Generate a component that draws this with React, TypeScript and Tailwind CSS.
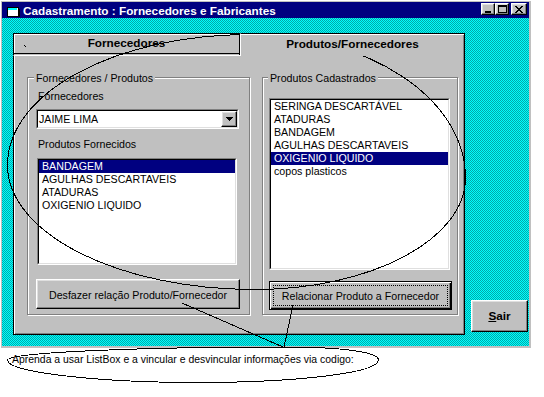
import React from 'react';

const raised =
  'border border-t-white border-l-white border-r-black border-b-black shadow-[inset_-1px_-1px_0_#808080,inset_1px_1px_0_#dfdfdf]';

function Sunken({ className, children }: { className?: string; children?: React.ReactNode }) {
  return (
    <div className={`border border-t-[#808080] border-l-[#808080] border-r-white border-b-white ${className ?? ''}`}>
      <div className="h-full w-full border border-t-black border-l-black border-r-[#dfdfdf] border-b-[#dfdfdf] bg-white overflow-hidden">
        {children}
      </div>
    </div>
  );
}

function ListBox({ items, selected, className }: { items: string[]; selected: number; className?: string }) {
  return (
    <Sunken className={className}>
      {items.map((t, i) => (
        <div
          key={t}
          className={`h-[13px] leading-[13px] pl-[3px] whitespace-nowrap ${i === selected ? 'bg-[#000080] text-white' : ''}`}
        >
          {t}
        </div>
      ))}
    </Sunken>
  );
}

function GroupBox({ title, className, children }: { title: string; className?: string; children?: React.ReactNode }) {
  return (
    <div
      className={`border border-[#808080] shadow-[inset_1px_1px_0_#fff,1px_1px_0_#fff] flex flex-col items-start ${className ?? ''}`}
    >
      <span className="-mt-[6px] px-[2px] bg-[#c0c0c0] leading-[12px] whitespace-nowrap legend">{title}</span>
      {children}
    </div>
  );
}

function TitleButton({ children, className }: { children: React.ReactNode; className?: string }) {
  return (
    <div className={`mt-[1px] w-[14px] h-[12px] bg-[#c0c0c0] flex items-center justify-center ${raised} ${className ?? ''}`}>
      {children}
    </div>
  );
}

function TitleBar() {
  return (
    <div className="h-[16px] bg-[#000080] flex items-start pl-[4px] pr-[2px]">
      <svg className="mt-[4px]" width="15" height="11" viewBox="0 0 15 11" shapeRendering="crispEdges">
        <rect x="1" y="1" width="11" height="9" fill="#fff" stroke="#000" />
        <rect x="2" y="2" width="9" height="2" fill="#00ffff" />
        <rect x="12" y="3" width="2" height="8" fill="#000" />
        <rect x="3" y="10" width="11" height="1" fill="#000" />
      </svg>
      <span className="ml-[2px] pt-[2px] leading-[14px] text-white font-bold text-[11.75px] whitespace-nowrap">
        Cadastramento : Fornecedores e Fabricantes
      </span>
      <div className="flex-1" />
      <TitleButton>
        <svg width="6" height="8" viewBox="0 0 6 8" shapeRendering="crispEdges">
          <rect x="0" y="6" width="6" height="2" fill="#000" />
        </svg>
      </TitleButton>
      <TitleButton>
        <svg width="9" height="8" viewBox="0 0 9 8" shapeRendering="crispEdges">
          <rect x="0.5" y="0.5" width="8" height="7" fill="none" stroke="#000" />
          <rect x="0" y="1" width="9" height="1" fill="#000" />
        </svg>
      </TitleButton>
      <TitleButton className="ml-[2px] w-[16px]">
        <svg width="8" height="7" viewBox="0 0 8 7" shapeRendering="crispEdges">
          <path d="M0 0h2l2 2.4 2-2.4h2l-3 3.5 3 3.5h-2l-2-2.4-2 2.4h-2l3-3.5z" fill="#000" />
        </svg>
      </TitleButton>
    </div>
  );
}

function TabControl() {
  return (
    <div className="w-[452px] h-[303px] flex flex-col">
      <div className="h-[23px] flex items-end">
        <div className="w-[227px] h-[22px] bg-[#c0c0c0] border-t border-l border-r border-black shadow-[inset_0_-1px_0_#c0c0c0,inset_0_-2px_0_#000,inset_1px_1px_0_#fff] text-center font-bold text-[11.75px] leading-[14px] pt-[2px]">
          Fornecedores
        </div>
        <div className="relative z-10 w-[225px] h-[23px] -mb-[1px] bg-[#c0c0c0] border-t border-r border-l border-t-black border-r-black border-l-white shadow-[inset_0_1px_0_#fff,inset_-1px_0_0_#808080] text-center font-bold text-[11.75px] leading-[14px] pt-[3px]">
          Produtos/Fornecedores
        </div>
      </div>
      <div className="h-[280px] bg-[#c0c0c0] border border-t-white border-l-black border-r-black border-b-black shadow-[inset_1px_0_0_#fff,inset_-1px_-1px_0_#808080] flex items-start pl-[13px] pt-[21px] gap-[12px]">
        <GroupBox title="Fornecedores / Produtos" className="w-[223px] h-[238px] pl-[8px] [&>.legend]:-ml-[2px]">
          <span className="mt-[6px] ml-[2px] leading-[12px]">Fornecedores</span>
          <Sunken className="mt-[7px] w-[203px] h-[20px]">
            <div className="flex h-full">
              <span className="flex-1 pl-[1px] leading-[16px]">JAIME LIMA</span>
              <div className={`w-[16px] h-[16px] bg-[#c0c0c0] flex items-center justify-center ${raised}`}>
                <svg width="7" height="4" viewBox="0 0 7 4" shapeRendering="crispEdges">
                  <path d="M0 0h7l-3.5 4z" fill="#000" />
                </svg>
              </div>
            </div>
          </Sunken>
          <span className="mt-[9px] ml-[2px] leading-[12px]">Produtos Fornecidos</span>
          <ListBox
            className="mt-[8px] ml-[1px] w-[200px] h-[107px]"
            items={['BANDAGEM', 'AGULHAS DESCARTAVEIS', 'ATADURAS', 'OXIGENIO LIQUIDO']}
            selected={0}
          />
          <button className={`mt-[14px] w-[204px] h-[30px] bg-[#c0c0c0] pt-[2px] leading-[12px] ${raised}`}>
            Desfazer relação Produto/Fornecedor
          </button>
        </GroupBox>
        <GroupBox title="Produtos Cadastrados" className="w-[196px] h-[238px] pl-[6px] [&>.legend]:-ml-[1px]">
          <ListBox
            className="mt-[14px] w-[181px] h-[172px]"
            items={['SERINGA DESCARTÁVEL', 'ATADURAS', 'BANDAGEM', 'AGULHAS DESCARTAVEIS', 'OXIGENIO LIQUIDO', 'copos plasticos']}
            selected={4}
          />
          <button className="mt-[11px] w-[183px] h-[29px] bg-[#c0c0c0] border border-black shadow-[inset_1px_1px_0_#fff,inset_-1px_-1px_0_#000,inset_-2px_-2px_0_#808080] p-[3px] flex">
            <span className="flex-1 border border-dotted border-black flex items-center justify-center leading-[12px]">
              Relacionar Produto a Fornecedor
            </span>
          </button>
        </GroupBox>
      </div>
    </div>
  );
}

function Annotations() {
  return (
    <svg className="absolute left-0 top-0 pointer-events-none" width="544" height="397" viewBox="0 0 544 397" fill="none" stroke="#000" strokeWidth="1" shapeRendering="crispEdges">
      <path d="M7.5 165 C7.5 92.6 115.8 34.5 250 34.5 C368.7 34.5 465.5 98.5 465.5 178 C465.5 239.3 371 289.5 255 289.5 C118 289.5 7.5 233.5 7.5 165 Z" />
      <path d="M182 303 L283 347" />
      <path d="M293 305 L284 347" />
      <path d="M7.5 360 C10 352 150 347 284 347 C342 347 378.5 352 378.5 360 C378.5 373 296 382.5 198 382.5 C95 382.5 7.5 372 7.5 360 Z" />
      <path d="M24.5 45 L25.5 47" />
    </svg>
  );
}

export default function App() {
  return (
    <div className="relative w-[544px] h-[397px] bg-white overflow-hidden font-['Liberation_Sans',Arial,sans-serif] text-black text-[10.65px]">
      <div className="w-[531px] h-[348px] bg-[#c0c0c0] p-[2px] shadow-[inset_1px_1px_0_#fff] flex flex-col">
        <TitleBar />
        <div className="flex-1 flex items-start pl-[11px] pt-[14px] bg-[image:repeating-conic-gradient(#00ffff_0%_25%,#00a8a8_0%_50%)] bg-[length:2px_2px]">
          <TabControl />
          <button className={`ml-[6px] mt-[268px] w-[57px] h-[32px] bg-[#c0c0c0] font-bold text-[11.75px] leading-[14px] ${raised}`}>
            <span className="underline underline-offset-[1px]">S</span>air
          </button>
        </div>
      </div>
      <p className="mt-[6px] pl-[12px] leading-[12px] whitespace-nowrap text-[10.45px]">
        Aprenda a usar ListBox e a vincular e desvincular informações via codigo:
      </p>
      <Annotations />
    </div>
  );
}
